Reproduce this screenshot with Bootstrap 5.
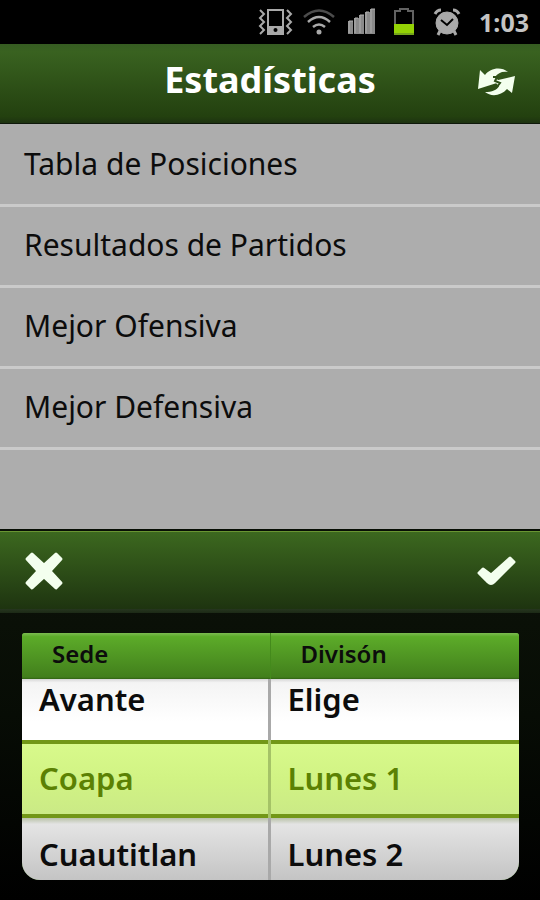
<!DOCTYPE html>
<html lang="es">
<head>
<meta charset="utf-8">
<meta name="viewport" content="width=device-width, initial-scale=1">
<title>Estadísticas</title>
<link href="https://cdn.jsdelivr.net/npm/bootstrap@5.3.0/dist/css/bootstrap.min.css" rel="stylesheet">
<style>
  body { font-family: "Noto Sans", "Open Sans", sans-serif; background: #000; color: #0c0c0c; }
  .status-bar { height: 44px; padding: 0 11px; gap: 9px; color: #a9a9a9; }
  .clock { font-size: 25px; line-height: 32px; font-weight: 700; color: #c4c4c4; margin-left: 6px; }
  .title-bar { height: 80px; padding: 0 24px 4px; background: linear-gradient(#365c22, #396220 10%, #23400f 92%, #1d3210); border-bottom: 1px solid #0e180a; }
  .title-bar h1 { font-size: 36px; line-height: 40px; color: #fff; }
  .side-slot { width: 40px; }
  .icon-btn { color: #f3ffee; line-height: 0; border: 0; }
  .option-list { background: #adadad; padding-top: 2px; }
  .option-list .list-group-item { height: 81px; padding: 0 24px 2px; font-size: 30px; line-height: 40px; background: transparent; color: #0c0c0c; border-color: #cacaca; border-width: 0 0 3px; }
  .option-list .list-group-item:last-child { border-bottom-width: 3px; }
  .sheet { background: linear-gradient(#0d1409, #070c05 50%, #000); border-top: 2px solid #080f05; }
  .tool-bar { height: 82px; padding: 0 24px 4px; background: linear-gradient(#3c681f, #1e3410 95%, #26361f 95%, #1c2a16); border-top: 1px solid #699532; }
  .picker { margin: 20px 21px 20px 22px; border-radius: 3px 3px 18px 18px; background: linear-gradient(#50a123, #3f7d1b); }
  .wheel + .wheel .wheel-head { box-shadow: -1px 0 #448a1c; }
  .wheel:first-child .wheel-row { border-right: 3px solid #a9a9a9; }
  .wheel:first-child .wheel-row.picked { border-right-color: #a5c367; }
  .wheel-head { height: 46px; padding: 0 30px; font-size: 24px; line-height: 42px; font-weight: 600; background: linear-gradient(#7cbb51, #5cab29 8%, #427f1c 96%, #2f6212); }
  .wheel-row { padding: 0 17px; font-size: 31px; line-height: 40px; font-weight: 600; cursor: pointer; }
  .above { height: 61px; padding-bottom: 21px; background: linear-gradient(#d6d6d6, #f4f4f4 6%, #fff 70%); }
  .picked { height: 78px; padding-bottom: 3px; color: #5b8103; background: linear-gradient(#d9fa8c, #d1f384 50%, #cae986); box-shadow: inset 0 4px #729717, inset 0 -4px #729717; }
  .below { height: 62px; padding-top: 10px; background: linear-gradient(#b9c2a9, #e4e4e4 10%, #c4c4c4); }
</style>
</head>
<body>
<div class="min-vh-100 d-flex flex-column">
  <div class="status-bar d-flex align-items-center justify-content-end">
    <svg width="36" height="28" viewBox="0 0 36 28" fill="none" stroke="currentColor" stroke-width="2" aria-hidden="true">
      <path d="M2 2l4 4-4 4 4 4-4 4 4 4-4 4M29 2l4 4-4 4 4 4-4 4 4 4-4 4"/>
      <path d="M9 1h17v26H9zM11 3v15h13V3z" fill="currentColor" fill-rule="evenodd" stroke="none"/>
      <circle cx="17.500" cy="22" r="2" fill="#000" stroke="none"/>
    </svg>
    <svg width="32" height="28" viewBox="0 0 32 28" fill="none" stroke="currentColor" stroke-width="2.500" aria-hidden="true">
      <path d="M1 9q15-13 30 0" stroke="#4c4c4c"/><path d="M5 14q11-10 22 0M10 19q6-5 12 0"/>
      <circle cx="16" cy="24" r="2.500" fill="currentColor" stroke="none"/>
    </svg>
    <svg width="36" height="28" viewBox="-4 0 36 28" fill="#8a8a8a" aria-hidden="true">
      <path d="M0 13h5v13H0zM6 10h5v16H6zM11 7h5v19h-5zM17 4h5v22h-5zM22 1h5v25h-5z"/>
      <path d="M1 25V13h4M7 25V10h3M12 25V7h4M18 25V4h3M23 25V1h4" fill="none" stroke="#b0b0b0"/>
    </svg>
    <svg width="32" height="28" viewBox="0 0 32 28" aria-hidden="true">
      <path d="M6 17V3h5V1h8v2h5v14" fill="none" stroke="#626262" stroke-width="2"/>
      <path d="M5 16h20v11H5z" fill="#94d205"/><path d="M5 25h20v2H5z" fill="#75a51a"/>
    </svg>
    <svg width="34" height="28" viewBox="-3 0 34 28" fill="none" stroke="currentColor" aria-hidden="true">
      <circle cx="14" cy="15" r="11" fill="currentColor"/>
      <path d="M2 6q2-4 6-4M26 6q-2-4-6-4M7 23l-2 4M21 23l2 4" stroke-width="3"/>
      <path d="M8 12l6 5 6-6" stroke="#000" stroke-width="2"/>
    </svg>
    <span class="clock">1:03</span>
  </div>

  <header class="title-bar d-flex align-items-center justify-content-between">
    <span class="side-slot"></span>
    <h1 class="fw-bold m-0 pb-1">Estadísticas</h1>
    <button type="button" class="btn icon-btn p-0 side-slot" aria-label="Actualizar">
      <svg width="40" height="32" viewBox="0 0 40 32" fill="currentColor" aria-hidden="true">
        <path d="M4 4l5 5C14 2 25 0 32 6c-6-1-10 1-13 5l5 5L2 23z"/>
        <path d="M39 10l-3 17-5-4c-6 7-16 8-22 3 7 0 12-2 14-6l-5-5z"/>
        <path d="M17 11h4l-2 4 5 2-3 4" fill="none" stroke="#2d5018" stroke-width="2"/>
      </svg>
    </button>
  </header>

  <main class="option-list flex-grow-1">
    <nav class="list-group list-group-flush" aria-label="Estadísticas">
      <a href="#posiciones" class="list-group-item d-flex align-items-center">Tabla de Posiciones</a>
      <a href="#resultados" class="list-group-item d-flex align-items-center">Resultados de Partidos</a>
      <a href="#ofensiva" class="list-group-item d-flex align-items-center">Mejor Ofensiva</a>
      <a href="#defensiva" class="list-group-item d-flex align-items-center">Mejor Defensiva</a>
    </nav>
  </main>

  <form class="sheet">
    <div class="tool-bar d-flex align-items-center justify-content-between">
      <button type="button" class="btn icon-btn p-0" aria-label="Cancelar">
        <svg width="40" height="40" viewBox="0 0 40 40" fill="currentColor" stroke="currentColor" stroke-width="3" stroke-linejoin="round" aria-hidden="true">
          <path d="M8 3l12 11L32 3l5 5-11 12 11 12-5 5-12-11L8 37l-5-5 11-12L3 8z"/>
        </svg>
      </button>
      <button type="button" class="btn icon-btn p-0" aria-label="Aceptar">
        <svg width="40" height="32" viewBox="0 0 40 32" fill="currentColor" stroke="currentColor" stroke-width="3" stroke-linejoin="round" aria-hidden="true">
          <path d="M3 18l4-4 8 6L34 3l4 4-20 20q-3 3-6 0z"/>
        </svg>
      </button>
    </div>

    <div class="picker row g-0 overflow-hidden">
      <div class="wheel col" role="radiogroup" aria-labelledby="sede-head">
        <div class="wheel-head" id="sede-head">Sede</div>
        <input class="btn-check" type="radio" name="sede" id="sede-avante">
        <label class="wheel-row above d-flex align-items-center" for="sede-avante">Avante</label>
        <input class="btn-check" type="radio" name="sede" id="sede-coapa" checked>
        <label class="wheel-row picked d-flex align-items-center" for="sede-coapa">Coapa</label>
        <input class="btn-check" type="radio" name="sede" id="sede-cuautitlan">
        <label class="wheel-row below d-flex align-items-center" for="sede-cuautitlan">Cuautitlan</label>
      </div>
      <div class="wheel col" role="radiogroup" aria-labelledby="division-head">
        <div class="wheel-head" id="division-head">Divisón</div>
        <input class="btn-check" type="radio" name="division" id="division-elige">
        <label class="wheel-row above d-flex align-items-center" for="division-elige">Elige</label>
        <input class="btn-check" type="radio" name="division" id="division-1" checked>
        <label class="wheel-row picked d-flex align-items-center" for="division-1">Lunes 1</label>
        <input class="btn-check" type="radio" name="division" id="division-2">
        <label class="wheel-row below d-flex align-items-center" for="division-2">Lunes 2</label>
      </div>
    </div>
  </form>
</div>
<script src="https://cdn.jsdelivr.net/npm/bootstrap@5.3.0/dist/js/bootstrap.bundle.min.js"></script>
</body>
</html>
